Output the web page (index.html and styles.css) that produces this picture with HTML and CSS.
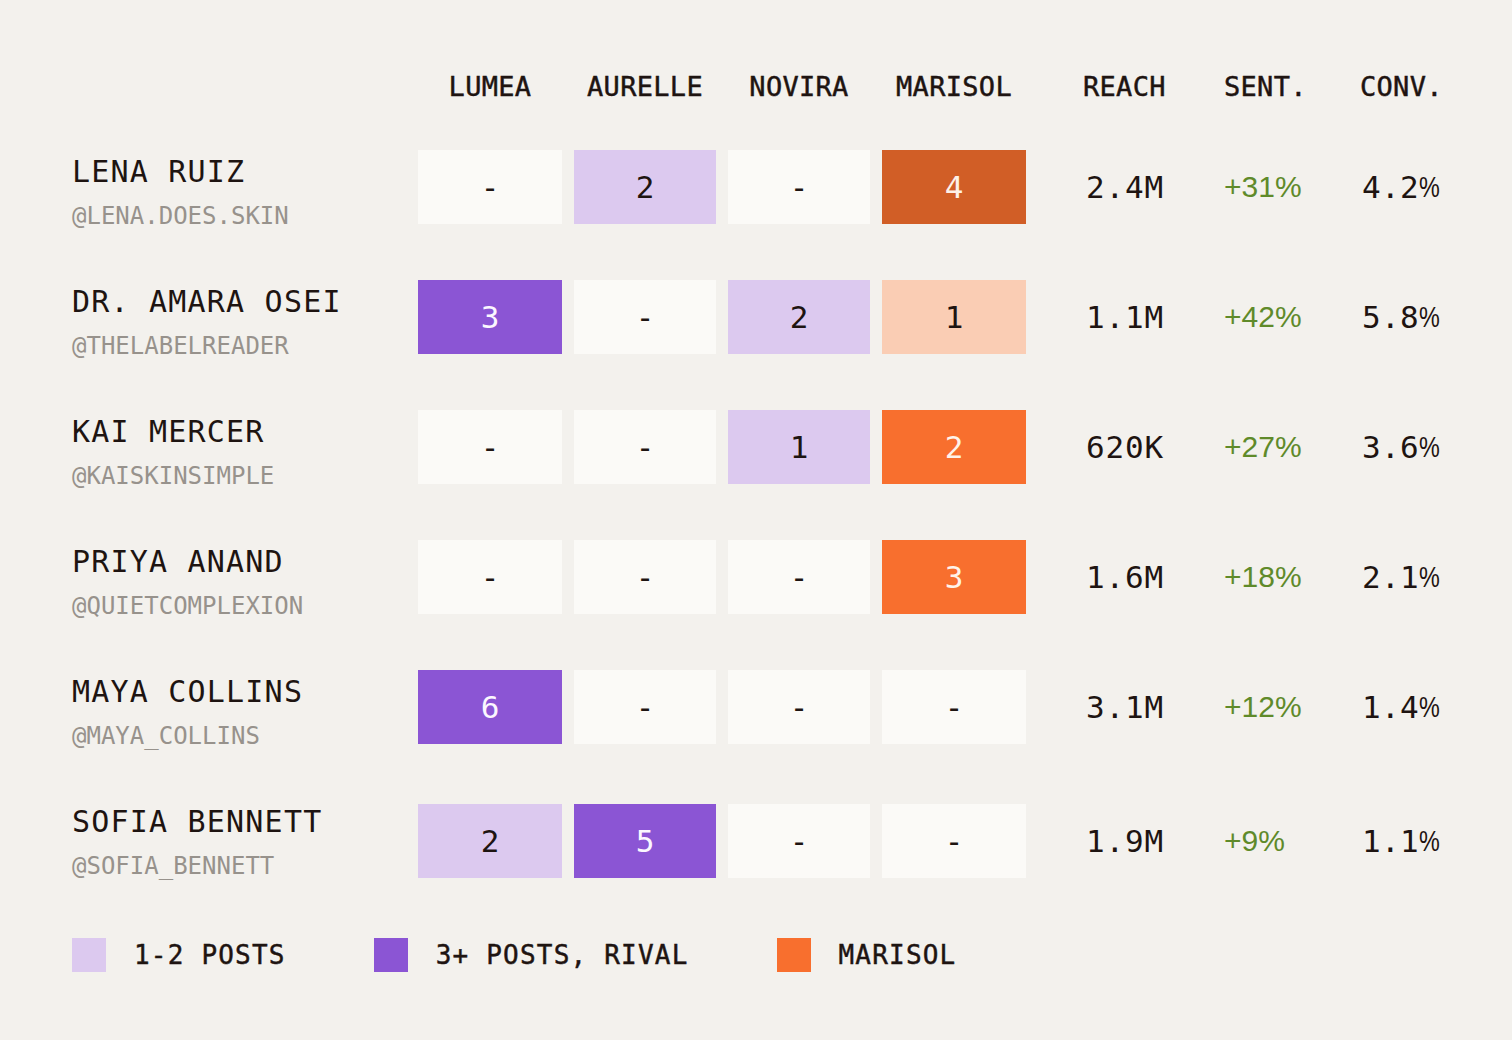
FILE: index.html
```html
<!DOCTYPE html>
<html>
<head>
<meta charset="utf-8">
<link rel="stylesheet" href="styles.css">
</head>
<body>
<div class="board">
  <div class="row head">
    <div class="name-col"></div>
    <div class="hcell">LUMEA</div>
    <div class="hcell">AURELLE</div>
    <div class="hcell">NOVIRA</div>
    <div class="hcell">MARISOL</div>
    <div class="hstat reach">REACH</div>
    <div class="hstat">SENT.</div>
    <div class="hstat">CONV.</div>
  </div>

  <div class="row body">
    <div class="name-col"><div class="name">LENA RUIZ</div><div class="handle">@LENA.DOES.SKIN</div></div>
    <div class="cell empty">-</div>
    <div class="cell light">2</div>
    <div class="cell empty">-</div>
    <div class="cell dark-orange">4</div>
    <div class="stat reach">2.4M</div>
    <div class="stat sent">+31%</div>
    <div class="stat conv">4.2<span class="pct">%</span></div>
  </div>

  <div class="row body">
    <div class="name-col"><div class="name">DR. AMARA OSEI</div><div class="handle">@THELABELREADER</div></div>
    <div class="cell purple">3</div>
    <div class="cell empty">-</div>
    <div class="cell light">2</div>
    <div class="cell peach">1</div>
    <div class="stat reach">1.1M</div>
    <div class="stat sent">+42%</div>
    <div class="stat conv">5.8<span class="pct">%</span></div>
  </div>

  <div class="row body">
    <div class="name-col"><div class="name">KAI MERCER</div><div class="handle">@KAISKINSIMPLE</div></div>
    <div class="cell empty">-</div>
    <div class="cell empty">-</div>
    <div class="cell light">1</div>
    <div class="cell orange">2</div>
    <div class="stat reach">620K</div>
    <div class="stat sent">+27%</div>
    <div class="stat conv">3.6<span class="pct">%</span></div>
  </div>

  <div class="row body">
    <div class="name-col"><div class="name">PRIYA ANAND</div><div class="handle">@QUIETCOMPLEXION</div></div>
    <div class="cell empty">-</div>
    <div class="cell empty">-</div>
    <div class="cell empty">-</div>
    <div class="cell orange">3</div>
    <div class="stat reach">1.6M</div>
    <div class="stat sent">+18%</div>
    <div class="stat conv">2.1<span class="pct">%</span></div>
  </div>

  <div class="row body">
    <div class="name-col"><div class="name">MAYA COLLINS</div><div class="handle">@MAYA_COLLINS</div></div>
    <div class="cell purple">6</div>
    <div class="cell empty">-</div>
    <div class="cell empty">-</div>
    <div class="cell empty">-</div>
    <div class="stat reach">3.1M</div>
    <div class="stat sent">+12%</div>
    <div class="stat conv">1.4<span class="pct">%</span></div>
  </div>

  <div class="row body last">
    <div class="name-col"><div class="name">SOFIA BENNETT</div><div class="handle">@SOFIA_BENNETT</div></div>
    <div class="cell light">2</div>
    <div class="cell purple">5</div>
    <div class="cell empty">-</div>
    <div class="cell empty">-</div>
    <div class="stat reach">1.9M</div>
    <div class="stat sent">+9%</div>
    <div class="stat conv">1.1<span class="pct">%</span></div>
  </div>

  <div class="legend">
    <div class="legend-item"><span class="swatch light"></span><span>1-2 POSTS</span></div>
    <div class="legend-item"><span class="swatch purple"></span><span>3+ POSTS, RIVAL</span></div>
    <div class="legend-item"><span class="swatch orange"></span><span>MARISOL</span></div>
  </div>
</div>
</body>
</html>
```

FILE: styles.css
```css
html, body {
  margin: 0;
  padding: 0;
}
body {
  background: #f3f1ed;
  color: #1e1411;
  font-family: "DejaVu Sans Mono", "Liberation Mono", monospace;
  width: 1512px;
  height: 1040px;
  overflow: hidden;
}
.board {
  padding: 71px 0 0 72px;
}
.row {
  display: grid;
  grid-template-columns: 334px 144px 142px 142px 144px 174px 124px 100px;
  column-gap: 12px;
}
.head {
  height: 32px;
  align-items: center;
}
.hcell,
.hstat {
  font-size: 27px;
  line-height: 32px;
  letter-spacing: 0.3px;
  -webkit-text-stroke: 0.45px currentColor;
}
.hcell {
  text-align: center;
}
.hstat.reach {
  padding-left: 45px;
}
.body {
  margin-top: 47px;
  align-items: start;
  height: 84px;
}
.body + .body {
  margin-top: 46px;
}
.name {
  font-size: 30px;
  line-height: 36px;
  letter-spacing: 1.2px;
  margin-top: 4px;
  white-space: nowrap;
}
.handle {
  font-size: 24px;
  line-height: 28px;
  color: #97928c;
  margin-top: 12px;
  letter-spacing: 0;
}
.cell {
  height: 74px;
  display: flex;
  align-items: center;
  justify-content: center;
  font-size: 31px;
}
.last .cell, .last .stat {
  margin-top: 4px;
}
.empty { background: #fbfaf7; }
.light { background: #dcc9ef; }
.purple { background: #8b55d4; color: #fbf7ff; }
.dark-orange { background: #d15e26; color: #fdf1e8; }
.orange { background: #f86f2e; color: #fff3ea; }
.peach { background: #facdb4; }
.stat {
  height: 74px;
  display: flex;
  align-items: center;
  font-size: 31px;
  letter-spacing: 0.8px;
}
.stat.reach {
  padding-left: 48px;
}
.stat.sent {
  color: #5f8a2a;
  font-family: "Liberation Sans", Arial, sans-serif;
  font-size: 30px;
  letter-spacing: 0;
}
.stat.conv {
  padding-left: 2px;
  letter-spacing: 0.3px;
}
.pct {
  display: inline-block;
  font-family: "Liberation Sans", Arial, sans-serif;
  font-size: 30px;
  letter-spacing: 0;
  transform: scaleX(0.78);
  transform-origin: left center;
}
.legend {
  display: flex;
  gap: 88px;
  margin-top: 54px;
}
.legend-item {
  display: flex;
  align-items: center;
  gap: 28px;
  font-size: 26px;
  letter-spacing: 1.2px;
  -webkit-text-stroke: 0.45px currentColor;
}
.swatch {
  width: 34px;
  height: 34px;
  display: block;
  -webkit-text-stroke: 0;
}
```
